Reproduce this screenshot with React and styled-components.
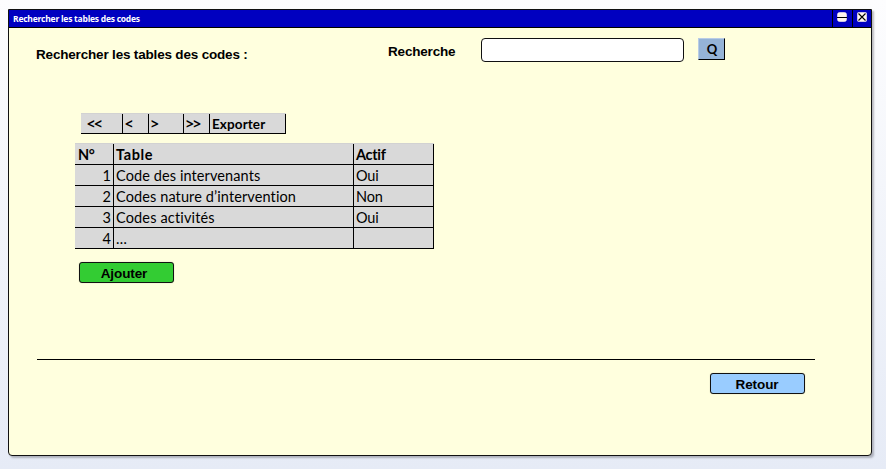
import React from "react";
import styled, { createGlobalStyle } from "styled-components";

const GlobalStyle = createGlobalStyle`
  * { box-sizing: border-box; }
  body { margin: 0; }
`;

const Desktop = styled.div`
  width: 886px;
  height: 469px;
  padding: 9px 0 0 8px;
  background: linear-gradient(#fdfdfe, #e6ebf6);
  font-family: "Liberation Sans", Arial, sans-serif;
  color: #000;
  overflow: hidden;
`;

const Window = styled.main`
  width: 864px;
  height: 447px;
  display: flex;
  flex-direction: column;
  border: 1px solid #111;
  border-radius: 0 0 4px 4px;
  background: #ffffde;
  box-shadow: 2px 2px 2px rgba(70, 70, 80, 0.35);
`;

const TitleBar = styled.header`
  height: 18px;
  flex: none;
  display: flex;
  background: #0000c0;
  border-bottom: 1px solid #000;
`;

const Title = styled.h1`
  flex: 1;
  margin: 0;
  padding-left: 4px;
  font: 700 8.5px/17px "Open Sans", sans-serif;
  letter-spacing: -0.23px;
  color: #fff;
`;

const WindowButton = styled.button`
  width: ${(p) => p.$width}px;
  height: 17px;
  padding: 2px 0 0 4px;
  border: 0;
  border-left: 1px solid #000;
  background: none;
  display: flex;
  align-items: flex-start;
  justify-content: flex-start;
`;

const Body = styled.div`
  flex: 1;
  display: flex;
  flex-direction: column;
  align-items: flex-start;
  padding: 10px 0 0 27px;
`;

const SearchRow = styled.form`
  display: flex;
  align-items: flex-start;
  height: 75px;
`;

const Label = styled.label`
  width: ${(p) => p.$width}px;
  padding-top: ${(p) => p.$top}px;
  font-size: 13.5px;
  font-weight: 700;
  line-height: 16px;
  letter-spacing: -0.18px;
  white-space: nowrap;
`;

const SearchInput = styled.input`
  width: 203px;
  height: 24px;
  border: 1px solid #111;
  border-radius: 4px;
  background: #fff;
  outline: 0;
`;

const SearchButton = styled.button`
  width: 27px;
  height: 22px;
  margin-left: 14px;
  padding: 0 0 0 1px;
  border: 1px solid;
  border-color: #b9cce6 #000 #000 #b9cce6;
  background: #95b3d7;
  color: #000;
  font: 700 13px/20px Lato, sans-serif;
`;

const Pager = styled.nav`
  display: flex;
  height: 21px;
  margin: 0 0 9px 45px;
  border-top: 1px solid #d2d2d2;
  border-bottom: 1px solid #000;
  background: #d9d9d9;
`;

const PagerButton = styled.button`
  width: ${(p) => p.$width}px;
  padding: 2px 0 0 ${(p) => p.$indent}px;
  border: 0;
  border-right: 1px solid #000;
  background: none;
  color: #000;
  font: 700 13.5px/17px ${(p) => (p.$arrow ? '"Open Sans"' : "Lato")}, sans-serif;
  letter-spacing: ${(p) => (p.$arrow ? -0.4 : 0.1)}px;
  text-align: left;
  white-space: nowrap;
`;

const Table = styled.table`
  width: 359px;
  margin-left: 39px;
  border-collapse: separate;
  border-spacing: 0;
  border-top: 1px solid #d2d2d2;
  table-layout: fixed;
  background: #d9d9d9;
  font: 400 14.5px/18px Lato, sans-serif;
`;

const Cell = styled.td`
  width: ${(p) => p.$width}px;
  height: 21px;
  padding: 2px 2px 0;
  border-right: 1px solid #000;
  border-bottom: 1px solid #000;
  letter-spacing: ${(p) => p.$track || 0}px;
  line-height: 18px;
  text-align: ${(p) => (p.$number ? "right" : "left")};
  white-space: nowrap;
`;

const HeadCell = styled(Cell)`
  padding-left: ${(p) => p.$indent || 2}px;
  font-weight: 700;
`;

const ActionButton = styled.button`
  width: 95px;
  height: 21px;
  padding: 2px ${(p) => p.$right}px 0 0;
  border: 1px solid #111;
  border-radius: 3px;
  background: ${(p) => p.$color};
  box-shadow: 0 0 1px rgba(0, 0, 0, 0.35);
  color: #000;
  font: 700 13.5px/17px "Liberation Sans", Arial, sans-serif;
  letter-spacing: -0.1px;
`;

const AddRow = styled.div`
  height: 110px;
  padding: 13px 0 0 43px;
`;

const Footer = styled.footer`
  width: 778px;
  margin-left: 1px;
  padding: 13px 10px 0 0;
  border-top: 1px solid #000;
  display: flex;
  justify-content: flex-end;
`;

const ROWS = [
  { n: 1, name: "Code des intervenants", active: "Oui", track: 0.1 },
  { n: 2, name: "Codes nature d’intervention", active: "Non", track: 0.11 },
  { n: 3, name: "Codes activités", active: "Oui", track: 0.16 },
  { n: 4, name: "…", active: "" },
];

function MinimizeIcon() {
  return (
    <svg width="10" height="10" viewBox="0 0 10 10">
      <rect x="0.5" y="0.5" width="9" height="9" rx="2" fill="#fff5ee" stroke="#fff5ee" strokeOpacity="0.6" />
      <path d="M0 5.5h10" stroke="#000" />
    </svg>
  );
}

function CloseIcon() {
  return (
    <svg width="10" height="10" viewBox="0 0 10 10">
      <rect x="0.5" y="0.5" width="9" height="9" rx="1" fill="#fff5ee" stroke="#fff5ee" strokeOpacity="0.6" />
      <path d="M1.5 1.5l7 7M8.5 1.5l-7 7" stroke="#000" strokeWidth="1.1" />
    </svg>
  );
}

export default function App() {
  return (
    <Desktop>
      <GlobalStyle />
      <Window>
        <TitleBar>
          <Title>Rechercher les tables des codes</Title>
          <WindowButton type="button" $width={20} aria-label="Réduire"><MinimizeIcon /></WindowButton>
          <WindowButton type="button" $width={19} aria-label="Fermer"><CloseIcon /></WindowButton>
        </TitleBar>
        <Body>
          <SearchRow>
            <Label as="span" $width={352} $top={9}>Rechercher les tables des codes :</Label>
            <Label htmlFor="search" $width={93} $top={6}>Recherche</Label>
            <SearchInput id="search" />
            <SearchButton type="button">Q</SearchButton>
          </SearchRow>
          <Pager>
            <PagerButton $arrow $width={42} $indent={6}>&lt;&lt;</PagerButton>
            <PagerButton $arrow $width={26} $indent={2}>&lt;</PagerButton>
            <PagerButton $arrow $width={35} $indent={2}>&gt;</PagerButton>
            <PagerButton $arrow $width={26} $indent={2}>&gt;&gt;</PagerButton>
            <PagerButton $width={76} $indent={2}>Exporter</PagerButton>
          </Pager>
          <Table>
            <thead>
              <tr>
                <HeadCell as="th" $width={39} $indent={3} $track={-0.4}>N°</HeadCell>
                <HeadCell as="th" $width={240} $track={0.6}>Table</HeadCell>
                <HeadCell as="th" $width={80} $track={-0.3}>Actif</HeadCell>
              </tr>
            </thead>
            <tbody>
              {ROWS.map((row) => (
                <tr key={row.n}>
                  <Cell $number>{row.n}</Cell>
                  <Cell $track={row.track}>{row.name}</Cell>
                  <Cell $track={-0.2}>{row.active}</Cell>
                </tr>
              ))}
            </tbody>
          </Table>
          <AddRow>
            <ActionButton type="button" $color="#33cc33" $right={5}>Ajouter</ActionButton>
          </AddRow>
          <Footer>
            <ActionButton type="button" $color="#99ccff" $right={1}>Retour</ActionButton>
          </Footer>
        </Body>
      </Window>
    </Desktop>
  );
}
